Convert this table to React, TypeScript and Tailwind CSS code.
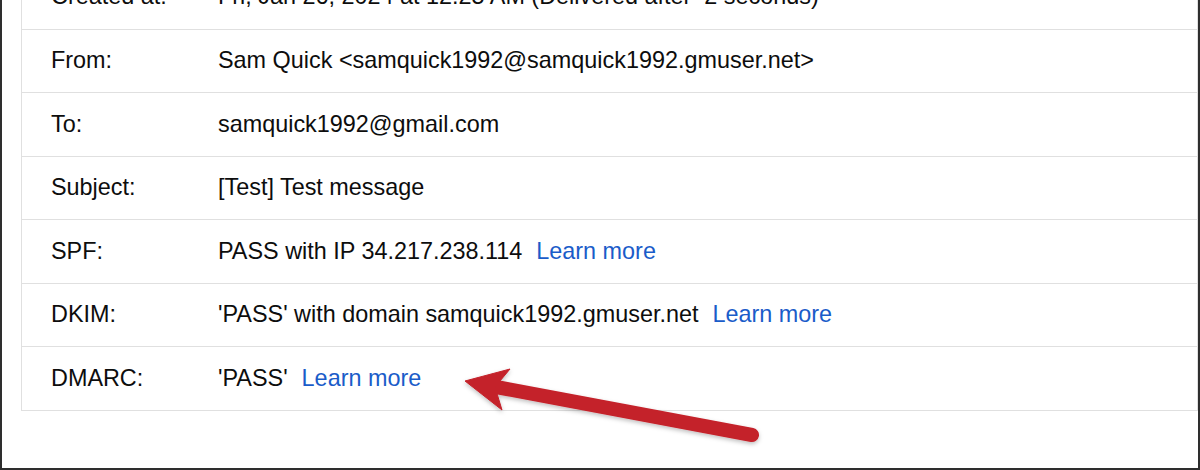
const rows: { label: string; value: string; link?: boolean }[] = [
  { label: "Created at:", value: "Fri, Jan 26, 2024 at 12:25 AM (Delivered after  2 seconds)" },
  { label: "From:", value: "Sam Quick <samquick1992@samquick1992.gmuser.net>" },
  { label: "To:", value: "samquick1992@gmail.com" },
  { label: "Subject:", value: "[Test] Test message" },
  { label: "SPF:", value: "PASS with IP 34.217.238.114", link: true },
  { label: "DKIM:", value: "'PASS' with domain samquick1992.gmuser.net", link: true },
  { label: "DMARC:", value: "'PASS'", link: true },
];

const Arrow = () => (
  <svg className="absolute left-0 top-0 pointer-events-none" width="1200" height="470" viewBox="0 0 1200 470">
    <defs>
      <filter id="shadow" x="-10%" y="-50%" width="120%" height="200%">
        <feDropShadow dx="0" dy="2" stdDeviation="2" floodColor="#000" floodOpacity="0.25" />
      </filter>
    </defs>
    <g filter="url(#shadow)" fill="#c4212a" stroke="#c4212a">
      <line x1="494" y1="387" x2="750" y2="435" strokeWidth="14" strokeLinecap="round" />
      <polygon points="463,381 508,369 493,387 500,410" strokeWidth="1" strokeLinejoin="round" />
    </g>
  </svg>
);

export default function App() {
  return (
    <div
      className="relative w-[1200px] h-[470px] overflow-hidden bg-white border-l-2 border-r-2 border-b-2 border-[#2e2e2e]"
      style={{ fontFamily: '"Liberation Sans", Arial, Helvetica, sans-serif' }}
    >
      <div className="ml-[19px] mt-[-35px] w-[1177px] border-l border-r border-b border-[#e0e0e0]">
        {rows.map((r, i) => (
          <div
            key={r.label}
            className={`flex items-center h-[63.5px] text-[23.4px] text-[#0d0d0d] ${i > 0 ? "border-t border-[#e0e0e0]" : ""}`}
          >
            <div className="w-[196px] pl-[29px] shrink-0">{r.label}</div>
            <div className="whitespace-pre">
              {r.value}
              {r.link && <span className="ml-[14px] text-[#1a5cc9]">Learn more</span>}
            </div>
          </div>
        ))}
      </div>
      <Arrow />
    </div>
  );
}
